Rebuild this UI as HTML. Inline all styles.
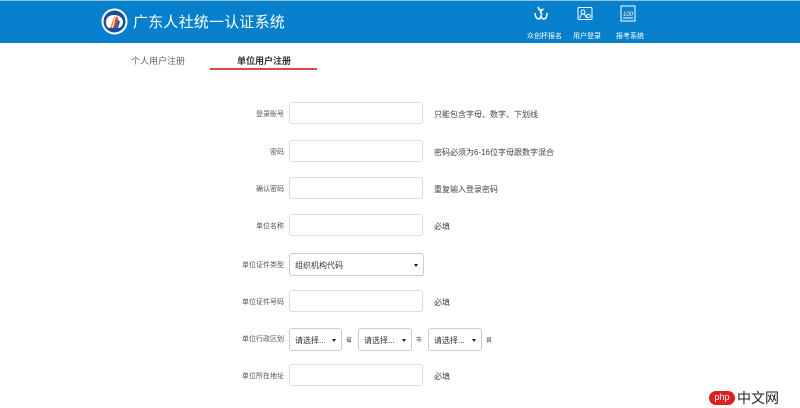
<!DOCTYPE html>
<html><head><meta charset="utf-8"><style>
*{margin:0;padding:0;box-sizing:border-box}
body{width:800px;height:401px;overflow:hidden;background:#fff;font-family:"Liberation Sans","Noto Sans CJK SC",sans-serif;position:relative}
.hd{position:absolute;left:0;top:0;width:800px;height:43px;background:#0680cc;border-top:1px solid #8ec3e8}
.abs{position:absolute;white-space:nowrap}
.title{left:133px;top:11px;color:#fff;font-size:15px;letter-spacing:0.2px}
.nav{color:#fff;font-size:7px;top:31px}
.lbl{font-size:7px;color:#555;text-align:right;width:80px}
.inp{position:absolute;left:289px;width:134px;height:22px;border:1px solid #ddd;border-radius:3px;background:#fff}
.hint{font-size:8px;color:#444}
.sel{position:absolute;height:23px;border:1px solid #ccc;border-radius:3px;background:#fff;font-size:8px;color:#333;padding:6px 0 0 5px}
.sel:after{content:"";position:absolute;right:5px;top:10px;border:2px solid transparent;border-top:3px solid #222}
</style></head><body>
<div class="hd"></div>
<svg class="abs" style="left:101px;top:8px" width="27" height="27" viewBox="0 0 27 27"><circle cx="13.5" cy="13.5" r="13" fill="#fff"/><circle cx="13.5" cy="13.5" r="11" fill="#1a4f9c"/><path d="M5 14c0-4 3-7 8-7s9 3 9 7c0 3-2 5-4 6H8c-2-1-3-3-3-6z" fill="#fff"/><path d="M9 20l4-11 1 0-3 11z" fill="#f08a1c"/><path d="M12 20l3-11 2 0-2 11z" fill="#e23b2a"/><path d="M14 20l3-9 2 3-2 6z" fill="#2b5fb0"/></svg>
<div class="abs title">广东人社统一认证系统</div>
<svg class="abs" style="left:533px;top:6px" width="16" height="16" viewBox="0 0 16 16" fill="none" stroke="#fff" stroke-width="1.5"><path d="M5 1l1.5 3 3-.5-2 2.5L9 9"/><path d="M2 7c0 5 3 6 4 6s2-2 2-4c0 2 1 4 3 4s3-3 3-6"/></svg>
<svg class="abs" style="left:577px;top:6px" width="16" height="16" viewBox="0 0 16 16" fill="none" stroke="#fff" stroke-width="1"><rect x="1" y="1.5" width="14" height="12" rx="1"/><circle cx="6" cy="6" r="2"/><path d="M3 12c0-3 2-4 3-4s3 1 3 4"/><circle cx="11.5" cy="10" r="1.8"/></svg>
<svg class="abs" style="left:620px;top:5px" width="16" height="17" viewBox="0 0 16 17" fill="none" stroke="#fff" stroke-width="1"><rect x="1" y="1" width="14" height="15"/><text x="3" y="11" font-size="6" fill="#fff" stroke="none" font-style="italic" font-family="Liberation Sans">100</text><path d="M3 13h10"/></svg>
<div class="abs nav" style="left:527px">众创杯报名</div>
<div class="abs nav" style="left:573px">用户登录</div>
<div class="abs nav" style="left:616px">报考系统</div>
<div class="abs" style="left:131px;top:54px;font-size:9px;color:#666">个人用户注册</div>
<div class="abs" style="left:237px;top:54px;font-size:9px;color:#333;font-weight:bold">单位用户注册</div>
<div class="abs" style="left:210px;top:68px;width:107px;height:1.5px;background:#e04848"></div>

<div class="abs lbl" style="left:204px;top:109px">登录账号</div><div class="inp" style="top:102px"></div><div class="abs hint" style="left:434px;top:109px">只能包含字母、数字、下划线</div>
<div class="abs lbl" style="left:204px;top:147px">密码</div><div class="inp" style="top:140px"></div><div class="abs hint" style="left:434px;top:147px">密码必须为6-16位字母跟数字混合</div>
<div class="abs lbl" style="left:204px;top:184px">确认密码</div><div class="inp" style="top:177px"></div><div class="abs hint" style="left:434px;top:184px">重复输入登录密码</div>
<div class="abs lbl" style="left:204px;top:221px">单位名称</div><div class="inp" style="top:214px"></div><div class="abs hint" style="left:434px;top:221px">必填</div>
<div class="abs lbl" style="left:204px;top:260px">单位证件类型</div><div class="sel" style="left:289px;top:253px;width:135px">组织机构代码</div>
<div class="abs lbl" style="left:204px;top:297px">单位证件号码</div><div class="inp" style="top:290px"></div><div class="abs hint" style="left:434px;top:297px">必填</div>
<div class="abs lbl" style="left:204px;top:334px">单位行政区划</div>
<div class="sel" style="left:289px;top:328px;width:53px">请选择...</div><div class="abs hint" style="left:346px;top:335px;font-size:6px">省</div>
<div class="sel" style="left:358px;top:328px;width:54px">请选择...</div><div class="abs hint" style="left:416px;top:335px;font-size:6px">市</div>
<div class="sel" style="left:428px;top:328px;width:54px">请选择...</div><div class="abs hint" style="left:486px;top:335px;font-size:6px">县</div>
<div class="abs lbl" style="left:204px;top:371px">单位所在地址</div><div class="inp" style="top:364px"></div><div class="abs hint" style="left:434px;top:371px">必填</div>
<div class="abs" style="left:709px;top:391px;width:26px;height:14px;border-radius:7px;background:#e02020;color:#fff;font-size:9px;text-align:center;line-height:13px">php</div>
<div class="abs" style="left:737px;top:388px;font-size:14px;color:#222">中文网</div>
</body></html>
